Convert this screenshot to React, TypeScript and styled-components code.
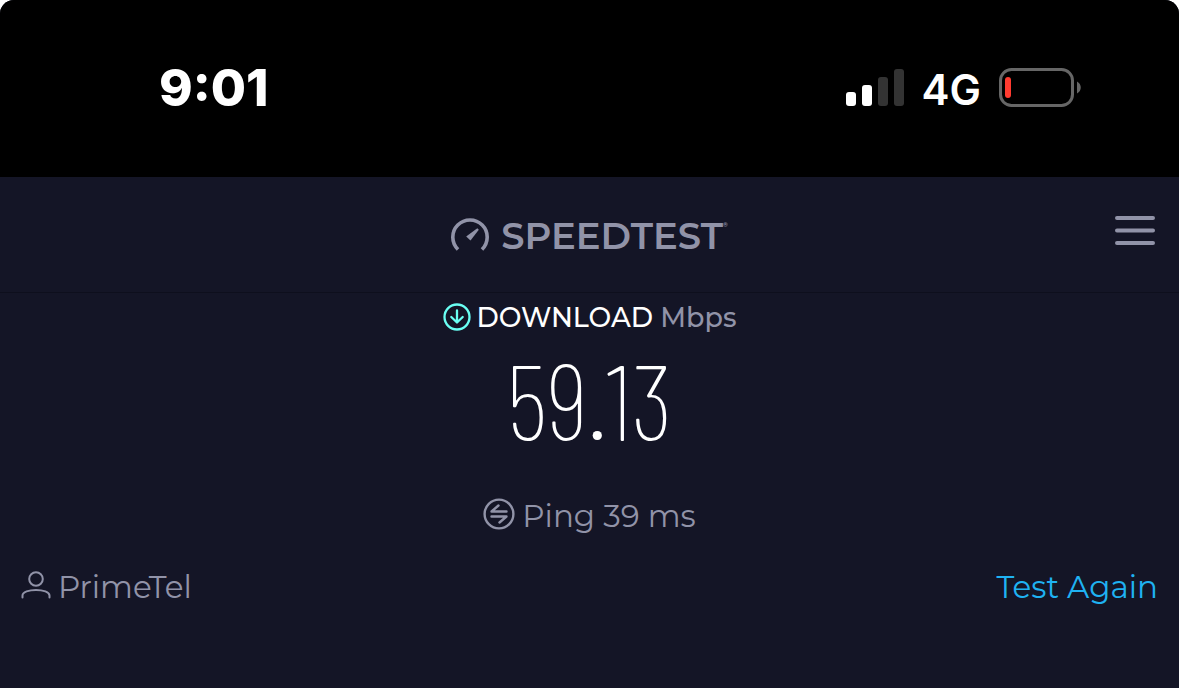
import React from "react";
import styled, { createGlobalStyle } from "styled-components";

const GlobalStyle = createGlobalStyle`
  * { box-sizing: border-box; }
  body {
    margin: 0;
    background: #fff;
    font-family: Montserrat, Inter, sans-serif;
    -webkit-font-smoothing: antialiased;
  }
`;

const muted = "#9193a8";

const Screen = styled.div`
  min-height: 100vh;
  display: flex;
  flex-direction: column;
  background: #141526;
  border-radius: 14px 14px 0 0;
  overflow: hidden;
`;

const StatusBar = styled.div`
  display: flex;
  align-items: center;
  justify-content: space-between;
  height: 177px;
  padding: 0 97px 2px 159px;
  background: #000;
  color: #fff;
`;

const Clock = styled.time`
  font: 800 51px/60px Inter, sans-serif;
`;

const Indicators = styled.div`
  display: flex;
  align-items: center;
  gap: 18px;
`;

const Network = styled.span`
  padding-top: 4px;
  font: 600 42px/48px Inter, sans-serif;
`;

const Header = styled.header`
  display: grid;
  grid-template-columns: 1fr auto 1fr;
  align-items: center;
  height: 116px;
  padding: 0 24px;
  border-bottom: 1px solid #0e0f1d;
`;

const Brand = styled.a`
  grid-column: 2;
  display: flex;
  align-items: center;
  gap: 12px;
  color: ${muted};
  text-decoration: none;
`;

const BrandName = styled.span`
  padding-top: 2px;
  font-size: 37px;
  line-height: 40px;
  font-weight: 600;
`;

const Registered = styled.sup`
  font-size: 6px;
  line-height: 6px;
  vertical-align: 22px;
`;

const MenuButton = styled.button`
  justify-self: end;
  display: flex;
  padding: 0 0 10px;
  border: 0;
  background: none;
  color: ${muted};
`;

const Results = styled.main`
  display: flex;
  flex-direction: column;
  align-items: center;
`;

const MetricLabel = styled.h1`
  display: flex;
  align-items: center;
  gap: 6px;
  margin: 0;
  font-size: 27px;
  line-height: 50px;
  font-weight: 500;
  color: #fff;

  svg {
    margin-bottom: 2px;
  }
`;

const Unit = styled.span`
  color: ${muted};
`;

const Speed = styled.output`
  font: 200 106px/112px "Barlow Condensed", "Roboto Condensed", sans-serif;
  color: #fff;
`;

const IconLabel = styled.div`
  display: flex;
  align-items: center;
  gap: 7px;
  color: ${muted};

  svg {
    margin-bottom: 4px;
  }
`;

const Ping = styled(IconLabel)`
  padding-top: 24px;
  font-size: 31px;
  line-height: 74px;
`;

const Footer = styled.footer`
  display: flex;
  align-items: center;
  justify-content: space-between;
  padding: 0 21px;
  font-size: 31px;
  line-height: 68px;
`;

const RetestButton = styled.button`
  padding: 0;
  border: 0;
  background: none;
  font: inherit;
  color: #1fb2f2;
`;

const SignalIcon = () => (
  <svg width="58" height="38" viewBox="0 0 58 38" aria-label="Signal">
    <rect x="0" y="23" width="10" height="14" rx="3" fill="#fff" />
    <rect x="16" y="16" width="10" height="21" rx="3" fill="#fff" />
    <rect x="32" y="8" width="10" height="29" rx="3" fill="#333" />
    <rect x="48" y="0" width="10" height="37" rx="3" fill="#333" />
  </svg>
);

const BatteryIcon = () => (
  <svg width="83" height="40" viewBox="0 0 83 40" aria-label="Battery">
    <rect x="1.5" y="1.5" width="72" height="36" rx="11" fill="none" stroke="#666" strokeWidth="3" />
    <rect x="6" y="9" width="6" height="21" rx="3" fill="#ff3b30" />
    <path d="M78 13.500c5 2.500 5 9.500 0 12z" fill="#666" />
  </svg>
);

const GaugeIcon = () => (
  <svg width="38" height="34" viewBox="0 0 38 34" fill="none" aria-hidden="true">
    <path d="M7 31.500A17.200 17.200 0 1 1 31 31.500" stroke="currentColor" strokeWidth="3.600" />
    <path d="M26.300 10.200l1.500 1.500-8.300 10.800-4.300-4z" fill="currentColor" />
  </svg>
);

const MenuIcon = () => (
  <svg width="40" height="30" viewBox="0 0 40 30" aria-hidden="true">
    <path d="M2 3h36M2 15.500h36M2 28h36" stroke="currentColor" strokeWidth="4" strokeLinecap="round" />
  </svg>
);

const DownloadIcon = () => (
  <svg width="28" height="28" viewBox="0 0 28 28" fill="none" stroke="#6afff3" strokeWidth="2.300" aria-hidden="true">
    <circle cx="14" cy="14" r="12.500" />
    <path d="M14 7.500v12M8.300 14l5.700 5.500 5.700-5.500" strokeLinecap="round" strokeLinejoin="round" />
  </svg>
);

const PingIcon = () => (
  <svg width="32" height="32" viewBox="0 0 32 32" fill="none" stroke="currentColor" strokeWidth="2.400" aria-hidden="true">
    <circle cx="16" cy="16" r="14.400" />
    <path d="M23.500 13.500H8.500L15.500 7.500M8.500 18.500h15l-7 6" strokeLinecap="round" strokeLinejoin="round" />
  </svg>
);

const UserIcon = () => (
  <svg width="30" height="28" viewBox="0 0 30 28" fill="none" stroke="currentColor" strokeWidth="2" aria-hidden="true">
    <circle cx="15" cy="8" r="6.800" />
    <path d="M1.500 26.500v-2C1.500 21 8 19 15 19s13.500 2 13.500 5.500v2" strokeLinecap="round" />
  </svg>
);

export default function App() {
  return (
    <>
      <GlobalStyle />
      <Screen>
        <StatusBar>
          <Clock>9:01</Clock>
          <Indicators>
            <SignalIcon />
            <Network>4G</Network>
            <BatteryIcon />
          </Indicators>
        </StatusBar>
        <Header>
          <Brand href="#">
            <GaugeIcon />
            <BrandName>
              SPEEDTEST<Registered>®</Registered>
            </BrandName>
          </Brand>
          <MenuButton aria-label="Menu">
            <MenuIcon />
          </MenuButton>
        </Header>
        <Results>
          <MetricLabel>
            <DownloadIcon />
            <span>
              DOWNLOAD <Unit>Mbps</Unit>
            </span>
          </MetricLabel>
          <Speed>59.13</Speed>
          <Ping>
            <PingIcon />
            Ping 39 ms
          </Ping>
        </Results>
        <Footer>
          <IconLabel>
            <UserIcon />
            PrimeTel
          </IconLabel>
          <RetestButton>Test Again</RetestButton>
        </Footer>
      </Screen>
    </>
  );
}
